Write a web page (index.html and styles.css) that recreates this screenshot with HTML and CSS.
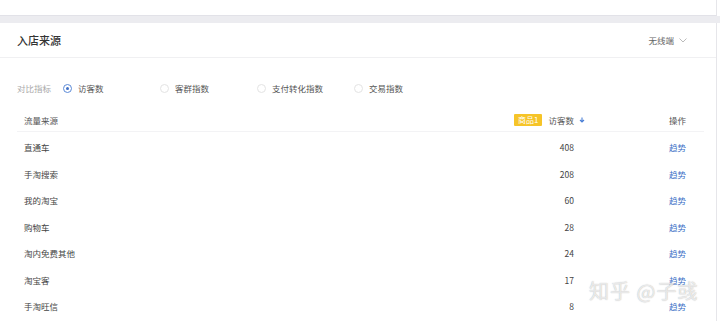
FILE: index.html
```html
<!DOCTYPE html>
<html lang="zh">
<head>
<meta charset="utf-8">
<link rel="stylesheet" href="styles.css">
</head>
<body>
<div class="page">
  <div class="topcard"></div>
  <div class="band"></div>
  <div class="card">
    <div class="card-head">
      <div class="title">入店来源</div>
      <div class="device">无线端 <svg class="chev" width="8" height="5" viewBox="0 0 8 5"><path d="M0.5 0.5 L4 4 L7.5 0.5" fill="none" stroke="#bbb" stroke-width="1"/></svg></div>
    </div>
    <div class="metrics">
      <span class="metrics-label">对比指标</span>
      <label class="radio on"><span class="dot"></span>访客数</label>
      <label class="radio"><span class="dot"></span>客群指数</label>
      <label class="radio"><span class="dot"></span>支付转化指数</label>
      <label class="radio"><span class="dot"></span>交易指数</label>
    </div>
    <div class="table">
      <div class="row head">
        <div class="c-src">流量来源</div>
        <div class="c-num"><span class="badge">商品1</span><span>访客数</span><svg class="sort" width="6" height="6" viewBox="0 0 6 6"><path d="M3 0.5 V4.5 M1 3 L3 5 L5 3" fill="none" stroke="#4a7fd6" stroke-width="1.1"/></svg></div>
        <div class="c-op">操作</div>
      </div>
      <div class="row"><div class="c-src">直通车</div><div class="c-num">408</div><div class="c-op link">趋势</div></div>
      <div class="row"><div class="c-src">手淘搜索</div><div class="c-num">208</div><div class="c-op link">趋势</div></div>
      <div class="row"><div class="c-src">我的淘宝</div><div class="c-num">60</div><div class="c-op link">趋势</div></div>
      <div class="row"><div class="c-src">购物车</div><div class="c-num">28</div><div class="c-op link">趋势</div></div>
      <div class="row"><div class="c-src">淘内免费其他</div><div class="c-num">24</div><div class="c-op link">趋势</div></div>
      <div class="row"><div class="c-src">淘宝客</div><div class="c-num">17</div><div class="c-op link">趋势</div></div>
      <div class="row"><div class="c-src">手淘旺信</div><div class="c-num">8</div><div class="c-op link">趋势</div></div>
    </div>
  </div>
  <div class="watermark">知乎 @子彧</div>
</div>
</body>
</html>
```
FILE: styles.css
```css
* { box-sizing: border-box; }
html, body { margin: 0; padding: 0; }
body {
  width: 720px;
  height: 321px;
  overflow: hidden;
  background: #fff;
  font-family: "Noto Sans CJK SC", "Noto Sans", sans-serif;
  color: #444;
  font-size: 8.5px;
}
.page { position: relative; width: 720px; height: 321px; }
.topcard {
  height: 16px;
  width: 717px;
  background: #fff;
  border-right: 1px solid #e6e6ea;
  border-bottom: 1px solid #e2e2e8;
}
.band { height: 7px; background: #ececf0; }
.card {
  width: 717px;
  background: #fff;
  border-right: 1px solid #e6e6ea;
  height: 298px;
}
.card-head {
  height: 35px;
  display: flex;
  align-items: center;
  justify-content: space-between;
  padding: 0 29px 0 17px;
  border-bottom: 1px solid #f0f0f2;
}
.title { font-size: 11px; font-weight: 500; color: #333; }
.device { font-size: 8.5px; color: #666; display: flex; align-items: center; gap: 5px; }
.chev { display: block; }
.metrics {
  height: 50px;
  display: flex;
  align-items: center;
  padding-left: 17px;
  padding-top: 10px;
  color: #555;
}
.metrics-label { color: #aaa; width: 46px; }
.radio {
  display: flex;
  align-items: center;
  width: 97px;
}
.radio:last-child { width: auto; }
.dot {
  width: 9px; height: 9px;
  border: 1px solid #e3e3e3;
  border-radius: 50%;
  margin-right: 6px;
  position: relative;
}
.radio.on .dot { border-color: #5b8ad8; }
.radio.on .dot::after {
  content: "";
  position: absolute;
  left: 2px; top: 2px;
  width: 3px; height: 3px;
  border-radius: 50%;
  background: #3f6fc6;
}
.table { padding: 0 12px 0 17px; }
.row {
  height: 26.5px;
  display: flex;
  align-items: center;
  color: #444;
}
.row.head {
  height: 24px;
  border-bottom: 1px solid #f3f3f5;
  color: #555;
  margin-bottom: 2px;
}
.c-src { padding-left: 7px; flex: 1; }
.c-num {
  width: 120px;
  display: flex;
  justify-content: flex-end;
  align-items: center;
  margin-right: 95px;
}
.row.head .c-num { margin-right: 84px; }
.badge {
  background: #f6c428;
  color: #fff;
  font-size: 8px;
  padding: 0 4px;
  height: 12px;
  line-height: 12px;
  border-radius: 1px;
  margin-right: 6px;
}
.sort { margin-left: 5px; }
.c-op { width: 35px; }
.link { color: #3a70c6; }
.watermark {
  position: absolute;
  left: 589px;
  top: 276px;
  font-size: 20px;
  color: rgba(255,255,255,0.7);
  text-shadow: 0 0 1px rgba(120,120,120,0.6);
  letter-spacing: 1px;
  white-space: nowrap;
}
```
